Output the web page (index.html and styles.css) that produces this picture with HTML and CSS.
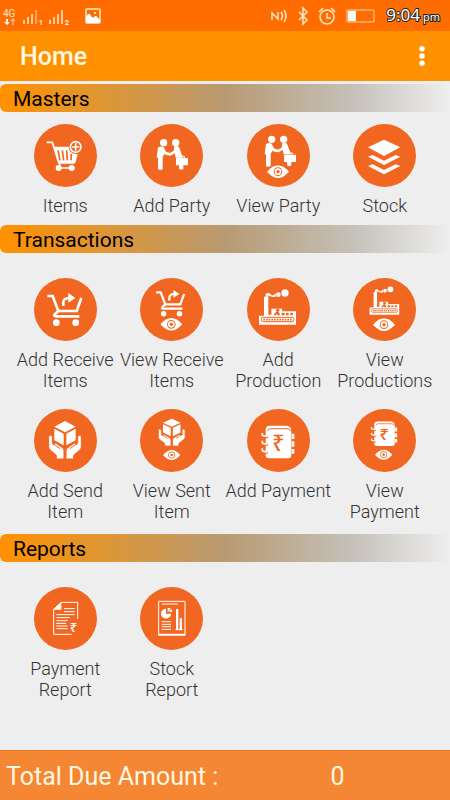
FILE: index.html
```html
<!DOCTYPE html>
<html lang="en">
<head>
<meta charset="utf-8">
<meta name="viewport" content="width=device-width, initial-scale=1">
<title>Home</title>
<link rel="stylesheet" href="styles.css">
</head>
<body>
<svg class="sprite" aria-hidden="true">
  <defs>
    <symbol id="eye" viewBox="0 0 66 38">
      <path class="fill" d="M0 19C12 6 22 0 33 0s21 6 33 19C54 32 44 38 33 38S12 32 0 19z"/>
      <circle class="cut" cx="33" cy="19" r="13"/>
      <circle class="fill" cx="33" cy="19" r="10"/>
      <circle class="cut" cx="33" cy="19" r="5"/>
    </symbol>
    <g id="party">
      <circle class="fill" cx="71" cy="56" r="11"/>
      <circle class="fill" cx="107" cy="56" r="11"/>
      <path class="fill" d="M54 70q8-5 17-1l7 14 12 4 1 8q-10 0-18-5l-5 10v36q-7 4-14 0v-34l-4-2z"/>
      <path class="fill" d="M103 67q8-3 14 2l12 32h-22l-3-13-12 7-4-7 13-7z"/>
      <path class="fill" d="M108 102h36v22h-36zM117 124h13v10q-6 6-13 0z"/>
      <path class="line thin" d="M119 102v-5h14v5"/>
    </g>
    <g id="receive">
      <path class="line" d="M40 54h16l17 45h55l14-39M73 99l-12 11q-2 5 5 5h70"/>
      <circle class="fill" cx="67" cy="134" r="10"/>
      <circle class="fill" cx="125" cy="134" r="10"/>
      <path class="line" d="M88 84V74q0-14 18-14"/>
      <path class="fill" d="M103 45l21 15-21 14z"/>
    </g>
    <g id="factory">
      <path class="fill" d="M51 56l13-2v56h9V92h32l2 16v-8h40v40H36v-27h15z"/>
      <path class="fill" d="M55 49q9-8 16 0t15-4v11q-8 3-16-1t-12 1z"/>
      <circle class="fill" cx="94" cy="50" r="7"/>
      <circle class="fill" cx="114" cy="45" r="11"/>
      <circle class="cut" cx="92" cy="97" r="5"/>
      <path class="cut" d="M79 112l8-10h8l5 10h-8l-3-4-3 4zM104 105h9v7h-9zM117 105h8v7h-8zM130 105h8v7h-8z"/>
      <rect class="cut-line thin" x="43" y="118" width="98" height="13" rx="6"/>
      <path class="cut-line dots" d="M49 125h88"/>
    </g>
    <g id="parcel">
      <path class="fill" d="M93 36l32 17-32 17-32-17zM61 59l28 15v35l-28-15zM125 59L97 74v35l28-15z"/>
      <path class="fill cut-edge" d="M44 82q5-6 11 0v20l5 6 4-6 17 11q9 4 9 12v25H67v-11l-16-14q-7-6-7-12z"/>
      <path class="fill cut-edge" d="M142 82q-5-6-11 0v20l-5 6-4-6-17 11q-9 4-9 12v25h23v-11l16-14q7-6 7-12z"/>
      <path class="cut-line thin" d="M61 107l17 12M125 107l-17 12"/>
    </g>
    <g id="ledger">
      <path class="fill" d="M56 62q0-12 12-12h50q10 0 13 8l2 10v71q0 9-9 9H66q-10 0-10-9z"/>
      <path class="cut-line thin" d="M62 66q1-7 9-7h52q6 0 6 7"/>
      <path class="fill" d="M134 74h8v16h-8zM134 97h8v16h-8zM134 120h8v14h-8z"/>
      <path class="cut-line thick" d="M49 84h14M49 107h14M49 130h14"/>
      <path class="line mid" d="M46 72v7q2 3 16 3M46 95v7q2 3 16 3M46 118v7q2 3 16 3"/>
      <text class="rupee cut" x="94" y="126">₹</text>
    </g>
  </defs>
</svg>

<div class="status">
  <div class="status-group">
    <svg class="status-net" viewBox="0 0 85 28" aria-hidden="true">
      <text class="net-text" x="3" y="15">4G</text>
      <path class="fill" d="M6 17h2v3h2l-3 3-3-3h2z"/>
      <path class="signal faint" d="M13 23v-5m-2 1l2-2 2 2"/>
      <path class="signal" d="M24 22v-4M28 22v-7M32 22V12M50 22v-4M54 22v-7M58 22V12M62 22V8"/>
      <path class="signal faint" d="M36 22V8"/>
      <text class="sim-text" x="39" y="23">1</text>
      <text class="sim-text" x="65" y="23">2</text>
    </svg>
    <svg class="status-photo" viewBox="0 0 16 16" aria-hidden="true">
      <rect class="signal" x="1" y="1" width="14" height="14" rx="1"/>
      <path class="fill" d="M1 9q3-6 5-1l2 2q3-4 5 0l2 2v3H1z"/>
      <circle class="fill" cx="10" cy="5" r="1"/>
    </svg>
  </div>
  <div class="status-group status-right">
    <svg class="status-icons" viewBox="0 0 106 20" aria-hidden="true">
      <path class="signal" d="M2 14V7l6 6V6M11 6q3 4 0 8M14 4q4 6 0 12"/>
      <path class="signal" d="M29 6l8 8-4 4V2l4 4-8 8"/>
      <circle class="signal" cx="57" cy="11" r="7"/>
      <path class="signal" d="M57 7v5h4M49 6l4-4M65 6l-4-4"/>
      <rect class="signal faint" x="77" y="4" width="27" height="12" rx="1"/>
      <path class="fill" d="M78 5h8v10h-8z"/>
    </svg>
    <span class="clock"><span>9:04</span><small>pm</small></span>
  </div>
</div>

<header class="toolbar">
  <h1>Home</h1>
  <button class="more" type="button" aria-label="More options">
    <svg viewBox="0 0 6 22" aria-hidden="true"><circle cx="3" cy="3" r="3"/><circle cx="3" cy="11" r="3"/><circle cx="3" cy="19" r="3"/></svg>
  </button>
</header>

<main>
  <section>
    <h2>Masters</h2>
    <div class="tiles tiles-compact">
      <button class="tile" type="button">
        <svg class="icon" viewBox="0 0 189 189" aria-hidden="true">
          <path class="line mid" d="M38 55h17l20 64"/>
          <path class="fill" d="M59 68h48l9 19 15 3-6 24q-1 5-7 5H74z"/>
          <path class="cut-line mid" d="M72 79l6 30M85 79l4 30M98 79l2 30M112 90l-1 19"/>
          <path class="line mid" d="M78 119l-3 13h38"/>
          <circle class="fill" cx="74" cy="132" r="9"/>
          <circle class="fill" cx="113" cy="132" r="9"/>
          <circle class="cut" cx="125" cy="69" r="21"/>
          <circle class="line mid" cx="125" cy="69" r="16"/>
          <path class="line mid" d="M125 58v22M114 69h22"/>
        </svg>
        <span>Items</span>
      </button>
      <button class="tile" type="button">
        <svg class="icon" viewBox="0 0 189 189" aria-hidden="true"><use href="#party"/></svg>
        <span>Add Party</span>
      </button>
      <button class="tile" type="button">
        <svg class="icon" viewBox="0 0 189 189" aria-hidden="true"><use href="#party" transform="translate(3 -10)"/><use href="#eye" x="60" y="124" width="66" height="38"/></svg>
        <span>View Party</span>
      </button>
      <button class="tile" type="button">
        <svg class="icon" viewBox="0 0 189 189" aria-hidden="true">
          <path class="fill" d="M93 47l49 23-49 26-48-26zM45 98l14-5 34 17 35-17 14 5-49 25zM45 126l14-5 34 17 35-17 14 5-49 25z"/>
        </svg>
        <span>Stock</span>
      </button>
    </div>
  </section>

  <section>
    <h2>Transactions</h2>
    <div class="tiles">
      <button class="tile" type="button">
        <svg class="icon" viewBox="0 0 189 189" aria-hidden="true"><use href="#receive"/></svg>
        <span>Add Receive Items</span>
      </button>
      <button class="tile" type="button">
        <svg class="icon" viewBox="0 0 189 189" aria-hidden="true"><use href="#receive" transform="translate(16 0) scale(.82 .8)"/><use href="#eye" x="61" y="120" width="66" height="38"/></svg>
        <span>View Receive Items</span>
      </button>
      <button class="tile" type="button">
        <svg class="icon" viewBox="0 0 189 189" aria-hidden="true"><use href="#factory"/></svg>
        <span>Add Production</span>
      </button>
      <button class="tile" type="button">
        <svg class="icon" viewBox="0 0 189 189" aria-hidden="true"><use href="#factory" transform="translate(21 -2) scale(.8)"/><use href="#eye" x="60" y="121" width="66" height="38"/></svg>
        <span>View Productions</span>
      </button>
      <button class="tile" type="button">
        <svg class="icon" viewBox="0 0 189 189" aria-hidden="true"><use href="#parcel"/></svg>
        <span>Add Send Item</span>
      </button>
      <button class="tile" type="button">
        <svg class="icon" viewBox="0 0 189 189" aria-hidden="true"><use href="#parcel" transform="translate(19 3) scale(.82 .72)"/><use href="#eye" x="69" y="121" width="52" height="34"/></svg>
        <span>View Sent Item</span>
      </button>
      <button class="tile" type="button">
        <svg class="icon" viewBox="0 0 189 189" aria-hidden="true"><use href="#ledger"/></svg>
        <span>Add Payment</span>
      </button>
      <button class="tile" type="button">
        <svg class="icon" viewBox="0 0 189 189" aria-hidden="true"><use href="#ledger" transform="translate(19 0) scale(.8 .75)"/><use href="#eye" x="66" y="121" width="52" height="32"/></svg>
        <span>View Payment</span>
      </button>
    </div>
  </section>

  <section>
    <h2>Reports</h2>
    <div class="tiles">
      <button class="tile" type="button">
        <svg class="icon" viewBox="0 0 189 189" aria-hidden="true">
          <path class="line thin" d="M113 142H59V67l22-21h50v50"/>
          <path class="fill" d="M58 68l24-23v23z"/>
          <path class="line thin" d="M90 65h32M90 74h32M67 83h55M67 92h40M67 101h34M67 109h29M67 117h34M67 125h34"/>
          <text class="rupee small fill" x="119" y="134">₹</text>
        </svg>
        <span>Payment Report</span>
      </button>
      <button class="tile" type="button">
        <svg class="icon" viewBox="0 0 189 189" aria-hidden="true">
          <path class="line thin" d="M56 43h79v101H56zM65 51h48M65 104h28M65 112h28M65 119h28M65 127h28M106 128h22"/>
          <path class="line mid" d="M55 143h81"/>
          <path class="fill" d="M108 66h7v62h-7zM119 94h7v34h-7z"/>
          <path class="fill" d="M78 65v15h15a15 15 0 1 1-15-15z"/>
          <path class="fill" d="M83 62q13 0 14 13H83z"/>
          <path class="cut-line thin" d="M84 76l8-10"/>
        </svg>
        <span>Stock<br>Report</span>
      </button>
    </div>
  </section>
</main>

<footer class="total">
  <span>Total Due Amount :</span>
  <output>0</output>
</footer>
</body>
</html>
```
FILE: styles.css
```css
* {
  box-sizing: border-box;
}

body {
  margin: 0;
  min-height: 100vh;
  display: flex;
  flex-direction: column;
  background: #eeeeee;
  font-family: Roboto, "Liberation Sans", sans-serif;
}

.sprite {
  position: absolute;
  width: 0;
  height: 0;
}

.fill {
  fill: #ffffff;
}

.cut {
  fill: #f16722;
}

.line,
.cut-line {
  fill: none;
  stroke: #ffffff;
  stroke-width: 8;
}

.cut-line {
  stroke: #f16722;
}

.cut-edge {
  stroke: #f16722;
  stroke-width: 3;
}

.mid {
  stroke-width: 5;
}

.thin {
  stroke-width: 3;
}

.thick {
  stroke-width: 7;
}

.dots {
  stroke-width: 5;
  stroke-dasharray: 5 3;
}

.rupee {
  font: 500 66px "Noto Sans", "Open Sans", sans-serif;
  text-anchor: middle;
}

.rupee.small {
  font-size: 40px;
}

/* Status bar */
.status {
  display: flex;
  justify-content: space-between;
  align-items: center;
  height: 31px;
  padding-right: 10px;
  background: #ff6d00;
  color: #ffffff;
}

.status-group {
  display: flex;
  align-items: center;
}

.status-net {
  width: 85px;
  height: 28px;
}

.status-photo {
  width: 16px;
  height: 16px;
}

.status-icons {
  width: 106px;
  height: 20px;
}

.status-right {
  gap: 10px;
}

.signal {
  fill: none;
  stroke: #ffe9c8;
  stroke-width: 1.5;
}

.faint {
  stroke: #ffb27a;
}

.net-text {
  font-size: 10px;
  fill: #ffe9c8;
}

.sim-text {
  font-size: 7px;
  font-weight: 700;
  fill: #ffffff;
}

.clock {
  display: flex;
  align-items: baseline;
  gap: 3px;
  font-family: "Noto Sans", sans-serif;
  font-size: 17px;
  line-height: 24px;
  -webkit-text-stroke: 2px #222222;
  paint-order: stroke fill;
  white-space: nowrap;
}

.clock small {
  font-size: 11px;
}

/* Toolbar */
.toolbar {
  display: flex;
  justify-content: space-between;
  align-items: center;
  height: 50px;
  padding: 0 16px 0 20px;
  background: #ff9100;
  color: #fff8e1;
}

h1 {
  margin: 0;
  padding-top: 2px;
  font-size: 25px;
  font-weight: 500;
  line-height: 32px;
}

.more {
  display: flex;
  justify-content: center;
  width: 24px;
  padding: 0;
  border: 0;
  background: none;
}

.more svg {
  width: 6px;
  height: 20px;
  fill: #ffffff;
}

/* Sections */
main {
  flex: 1;
  padding-top: 3px;
}

h2 {
  margin: 0;
  padding: 2px 13px 0;
  border-radius: 6px;
  background: linear-gradient(90deg, #ff9100 0%, #b89a72 50%, #c4c0b8 78%, #eeeeee 100%);
  color: #000000;
  font-size: 21px;
  font-weight: 400;
  line-height: 26px;
}

.tiles {
  display: grid;
  grid-template-columns: repeat(4, 1fr);
  row-gap: 18px;
  padding: 25px 12px 12px;
}

.tiles-compact {
  padding-top: 12px;
  padding-bottom: 9px;
}

.tile {
  display: flex;
  flex-direction: column;
  align-items: center;
  gap: 8px;
  min-width: 0;
  padding: 0;
  border: 0;
  background: none;
  color: #333333;
  font: 300 18px/21px Roboto, "Liberation Sans", sans-serif;
  text-align: center;
}

.icon {
  flex: none;
  width: 63px;
  height: 63px;
  border-radius: 50%;
  background: #f16722;
}

/* Total */
.total {
  display: grid;
  grid-template-columns: 1fr 1fr;
  align-items: center;
  height: 50px;
  padding-top: 2px;
  border-top: 1px solid #e07a20;
  background: #f58634;
  color: #fff8e1;
  font-size: 25px;
  line-height: 32px;
}

.total span {
  padding-left: 6px;
  white-space: nowrap;
}

.total output {
  text-align: center;
}
```
